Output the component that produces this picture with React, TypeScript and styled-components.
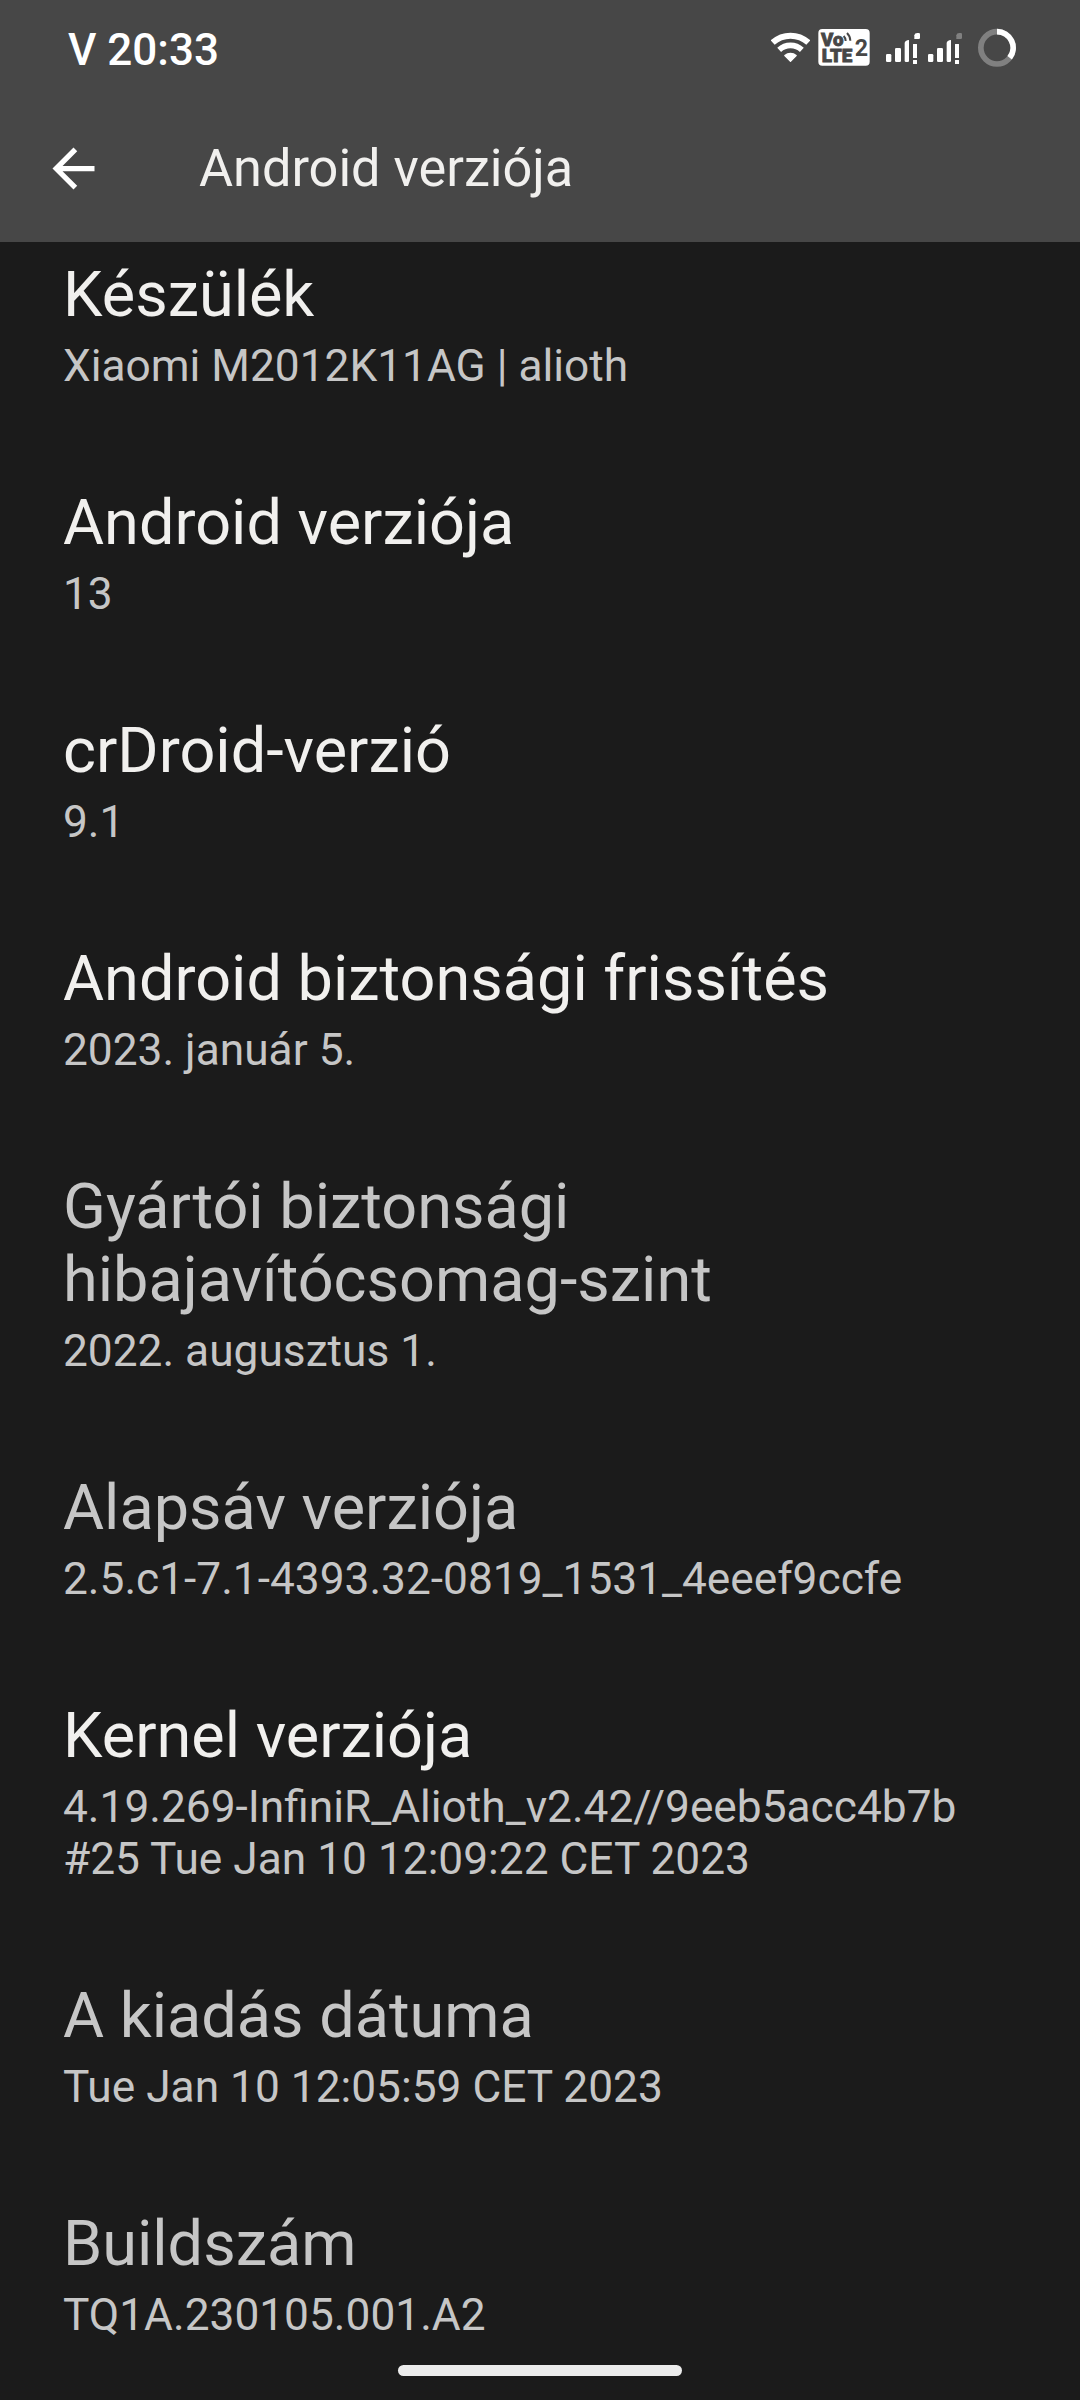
import React from "react";
import styled, { createGlobalStyle } from "styled-components";

const Global = createGlobalStyle`
  body { margin: 0; background: #1b1b1b; }
`;
const Screen = styled.div`
  width: 1080px;
  height: 2400px;
  overflow: hidden;
  position: relative;
  display: flex;
  flex-direction: column;
  background: #1b1b1b;
  font-family: Roboto, "Noto Sans", sans-serif;
`;
const Header = styled.header`
  height: 242px;
  flex: none;
  background: #474747;
`;
const Status = styled.div`
  height: 100px;
  box-sizing: border-box;
  padding: 0 64px 0 68px;
  display: flex;
  align-items: center;
  justify-content: space-between;
`;
const Clock = styled.span`
  font-size: 44px;
  line-height: 52px;
  font-weight: 500;
  color: #fff;
`;
const StatusIcons = styled.div`
  display: flex;
  margin-bottom: 4px;
`;
const Glyph = styled.svg<{ $gap?: number }>`
  display: block;
  height: 40px;
  margin-left: ${p => p.$gap ?? 0}px;
`;
const TitleBar = styled.div`
  height: 137px;
  display: flex;
  align-items: center;
  padding-left: 42px;
`;
const Title = styled.h1`
  margin: 0 0 0 94px;
  font-size: 52.25px;
  line-height: 61px;
  font-weight: 400;
  color: #f1f0ee;
`;
const List = styled.main`
  padding: 16px 63px 0;
`;
const Item = styled.section<{ $dim?: boolean }>`
  padding-bottom: 94px;
  color: ${p => (p.$dim ? "#c6c6c6" : "#f1f0ee")};
`;
const Name = styled.div`
  font-size: 63px;
  line-height: 73px;
  white-space: pre-line;
`;
const Value = styled.div`
  margin-top: 9px;
  font-size: 44.25px;
  line-height: 52px;
  color: #c6c6c6;
  white-space: pre-line;
`;
const HomeHandle = styled.div`
  position: absolute;
  left: 398px;
  bottom: 24px;
  width: 284px;
  height: 11px;
  border-radius: 6px;
  background: #ececec;
`;

const Wifi = () => (
  <Glyph width="39" viewBox="-58.5 -102 117 120" fill="none" stroke="#fff">
    <path d="M-53.5 -58.1A79 79 0 0 1 53.5 -58.1" strokeWidth="18" />
    <path d="M-34 -36.6A50 50 0 0 1 34 -36.6" strokeWidth="17" />
    <path d="M0 -2L-17 -19.5A26 26 0 0 1 17 -19.5Z" fill="#fff" strokeWidth="4" strokeLinejoin="round" />
  </Glyph>
);

const Volte = () => (
  <Glyph $gap={8} width="52" viewBox="234 54 156 120" fill="#474747">
    <rect x="235" y="57" width="154" height="110" rx="12" fill="#fff" />
    <g fontFamily="Roboto, sans-serif" fontWeight="900" fontSize="56" stroke="#474747" strokeWidth="2.5">
      <text x="243" y="107" textLength="67" lengthAdjust="spacingAndGlyphs">Vo</text>
      <text x="245" y="155" textLength="92" lengthAdjust="spacingAndGlyphs">LTE</text>
    </g>
    <text x="344" y="139" fontFamily="Roboto, sans-serif" fontWeight="700" fontSize="74" textLength="40" lengthAdjust="spacingAndGlyphs">2</text>
    <path d="M311 78Q317 84 317 93M321 69Q331 79 331 92" fill="none" stroke="#474747" strokeWidth="6" />
  </Glyph>
);

const Signal = ({ gap, tip }: { gap: number; tip: string }) => (
  <Glyph $gap={gap} width="35" viewBox="438 54 105 120" fill="#fff">
    <rect x="438" y="132" width="16" height="24" rx="4" />
    <rect x="465" y="114" width="18" height="42" rx="4" />
    <path d="M494 99Q495 91 507 90V152Q507 156 503 156H498Q494 156 494 152Z" />
    <rect x="519" y="102" width="12" height="42" rx="1" />
    <rect x="519" y="150" width="12" height="12" rx="1" />
    <path d="M523 87V76Q524 69 532 69H536Q540 69 540 73V83Q540 87 536 87Z" fill={tip} />
  </Glyph>
);

const Ring = () => (
  <Glyph $gap={15} width="38" viewBox="714 54 114 120" fill="none" strokeWidth="17">
    <circle cx="771" cy="113.5" r="48.5" stroke="#808080" />
    <path d="M771 65A48.5 48.5 0 0 1 809 143.5" stroke="#fff" />
  </Glyph>
);

const BackArrow = () => (
  <svg width="63" height="63" viewBox="0 0 24 24" fill="#fff">
    <path d="M20 11H7.83l5.59-5.59L12 4l-8 8 8 8 1.41-1.41L7.83 13H20v-2z" />
  </svg>
);

const rows: [string, string, boolean?][] = [
  ["Készülék", "Xiaomi M2012K11AG | alioth"],
  ["Android verziója", "13"],
  ["crDroid-verzió", "9.1"],
  ["Android biztonsági frissítés", "2023. január 5."],
  ["Gyártói biztonsági\nhibajavítócsomag-szint", "2022. augusztus 1.", true],
  ["Alapsáv verziója", "2.5.c1-7.1-4393.32-0819_1531_4eeef9ccfe", true],
  ["Kernel verziója", "4.19.269-InfiniR_Alioth_v2.42//9eeb5acc4b7b\n#25 Tue Jan 10 12:09:22 CET 2023"],
  ["A kiadás dátuma", "Tue Jan 10 12:05:59 CET 2023", true],
  ["Buildszám", "TQ1A.230105.001.A2", true],
];

export default function App() {
  return (
    <Screen>
      <Global />
      <Header>
        <Status>
          <Clock>V 20:33</Clock>
          <StatusIcons>
            <Wifi />
            <Volte />
            <Signal gap={16} tip="#fff" />
            <Signal gap={7} tip="#808080" />
            <Ring />
          </StatusIcons>
        </Status>
        <TitleBar>
          <BackArrow />
          <Title>Android verziója</Title>
        </TitleBar>
      </Header>
      <List>
        {rows.map(([name, value, dim]) => (
          <Item key={name} $dim={dim}>
            <Name>{name}</Name>
            <Value>{value}</Value>
          </Item>
        ))}
      </List>
      <HomeHandle />
    </Screen>
  );
}
